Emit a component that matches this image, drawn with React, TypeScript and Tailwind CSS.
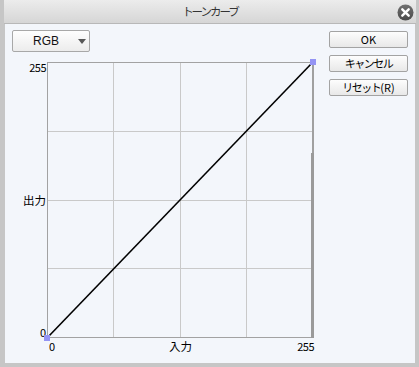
import React from "react";

const jp = { fontFamily: '"Noto Sans CJK JP", "Liberation Sans", sans-serif' };

function Btn({ children }: { children: React.ReactNode }) {
  return (
    <div className="w-[79px] h-[17px] rounded-[2px] border border-[#a3a3a3] bg-gradient-to-b from-[#fdfdfd] to-[#e8e8e8] flex items-center justify-center text-[11px] leading-none text-[#000]">
      {children}
    </div>
  );
}

export default function App() {
  return (
    <div className="w-[419px] h-[367px] bg-[#c6c6c6] flex flex-col" style={jp}>
      <div className="relative h-[24px] ml-[4px] mr-[3px] bg-gradient-to-b from-[#ececec] to-[#d6d6d6] border-b border-[#b8b8b8] flex items-center justify-center">
        <span className="text-[11.5px] text-[#333] tracking-[-2px] leading-none">トーンカーブ</span>
        <svg className="absolute right-[2px] top-[4px]" width="17" height="17" viewBox="0 0 17 17">
          <defs>
            <linearGradient id="cg" x1="0" y1="0" x2="0" y2="1">
              <stop offset="0" stopColor="#707070" />
              <stop offset="1" stopColor="#4a4a4a" />
            </linearGradient>
          </defs>
          <circle cx="8.5" cy="8.5" r="8" fill="url(#cg)" />
          <path d="M5.3 5.3 L11.7 11.7 M11.7 5.3 L5.3 11.7" stroke="#fff" strokeWidth="2.4" strokeLinecap="round" />
        </svg>
      </div>
      <div className="flex-1 ml-[5px] mr-[4px] mb-[4px] bg-[#f3f6fb] flex">
        <div className="flex flex-col pl-[7px] pt-[6px]">
          <div className="w-[78px] h-[22px] rounded-[2px] border border-[#a8a8a8] bg-gradient-to-b from-[#fefefe] to-[#ececec] flex items-center">
            <span className="ml-[20px] text-[12px] leading-none text-[#111]" style={{ fontFamily: '"Liberation Sans", sans-serif' }}>RGB</span>
            <svg className="ml-auto mr-[3px]" width="8" height="5" viewBox="0 0 8 5">
              <path d="M0 0 L8 0 L4 5 Z" fill="#585858" />
            </svg>
          </div>
          <div className="flex mt-[10px]">
            <div className="w-[35px] h-[276px] flex flex-col justify-between items-end pr-[1px] text-[11px] leading-[11px] text-[#000]">
              <span className="tracking-[-0.5px]">255</span>
              <span className="text-[11.5px]">出力</span>
              <span>0</span>
            </div>
            <div className="flex flex-col">
              <svg width="267" height="276" viewBox="0 0 267 276" overflow="visible">
                <g stroke="#c9c9c9" strokeWidth="1">
                  <line x1="66.5" y1="0" x2="66.5" y2="276" />
                  <line x1="133.5" y1="0" x2="133.5" y2="276" />
                  <line x1="199.5" y1="0" x2="199.5" y2="276" />
                  <line x1="0" y1="69.5" x2="266" y2="69.5" />
                  <line x1="0" y1="138.5" x2="266" y2="138.5" />
                  <line x1="0" y1="206.5" x2="266" y2="206.5" />
                </g>
                <g stroke="#a2a2a2" strokeWidth="1">
                  <line x1="0.5" y1="0" x2="0.5" y2="276" />
                  <line x1="0" y1="0.5" x2="266" y2="0.5" />
                  <line x1="0" y1="275.5" x2="266" y2="275.5" />
                </g>
                <rect x="265" y="0" width="2" height="276" fill="#a0a0a0" />
                <rect x="264" y="91" width="3" height="185" fill="#9a9a9a" />
                <line x1="0.5" y1="275.5" x2="265.5" y2="0.5" stroke="#000" strokeWidth="1.6" />
                <rect x="-3" y="273" width="6" height="6" fill="#9494f4" />
                <rect x="263" y="-3" width="6" height="6" fill="#9494f4" />
              </svg>
              <div className="grid grid-cols-3 w-[267px] h-[12px] text-[11px] leading-[12px] text-[#000] mt-[2px]">
                <span className="justify-self-start pl-[2px]">0</span>
                <span className="justify-self-center text-[11.5px]">入力</span>
                <span className="justify-self-end tracking-[-0.5px]">255</span>
              </div>
            </div>
          </div>
        </div>
        <div className="ml-auto mr-[7px] pt-[7px] flex flex-col gap-[7px]">
          <Btn><span>OK</span></Btn>
          <Btn><span className="tracking-[-1.5px]">キャンセル</span></Btn>
          <Btn><span className="tracking-[-1.5px]">リセット</span><span>(R)</span></Btn>
        </div>
      </div>
    </div>
  );
}
